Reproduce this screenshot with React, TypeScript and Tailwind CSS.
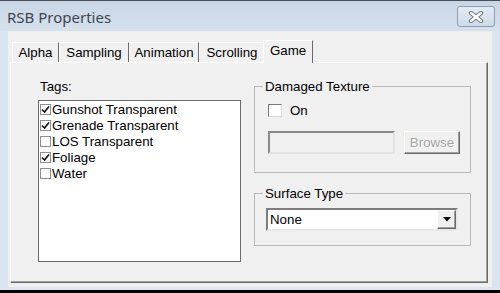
import React from "react";

const tabs = [
  { label: "Alpha", w: "w-[47px]" },
  { label: "Sampling", w: "w-[70px]" },
  { label: "Animation", w: "w-[70px]" },
  { label: "Scrolling", w: "w-[66px]" },
];

const tags = [
  { label: "Gunshot Transparent", checked: true },
  { label: "Grenade Transparent", checked: true },
  { label: "LOS Transparent", checked: false },
  { label: "Foliage", checked: true },
  { label: "Water", checked: false },
];

function ListCheck({ checked }: { checked: boolean }) {
  return (
    <div className="w-[11px] h-[11px] border border-[#8e8f8f] bg-white flex items-center justify-center shrink-0">
      {checked && (
        <svg width="9" height="9" viewBox="0 0 9 9">
          <path d="M1 4.5 L3.5 7 L8 1.5" fill="none" stroke="#111" strokeWidth="1.6" />
        </svg>
      )}
    </div>
  );
}

function CloseButton() {
  return (
    <div className="w-[38px] h-[21px] rounded-[3px] border border-[#8d9db3] bg-gradient-to-b from-[#e3ebf4] to-[#cfdbe9] flex items-center justify-center">
      <svg width="16" height="12" viewBox="0 0 16 12">
        <path d="M3 2 L13 10 M13 2 L3 10" stroke="#6f7a88" strokeWidth="4.4" strokeLinecap="round" />
        <path d="M3 2 L13 10 M13 2 L3 10" stroke="#ffffff" strokeWidth="2.4" strokeLinecap="round" />
      </svg>
    </div>
  );
}

export default function App() {
  return (
    <div className="w-[500px] h-[293px] flex flex-col bg-[#dbe5f0] border-t border-t-[#4a4f55] border-b-[3px] border-b-black overflow-hidden font-['Liberation_Sans',Arial,sans-serif] text-[13.3px] text-black">
      {/* title bar */}
      <div className="h-[30px] flex items-start justify-between pl-[7px] bg-gradient-to-b from-[#c9d6e5] to-[#d6e1ed]">
        <span className="mt-[6px] font-['Noto_Sans',sans-serif] text-[15px] leading-[20px] text-[#3d4650]">
          RSB Properties
        </span>
        <div className="mt-[5px] mr-[5px]">
          <CloseButton />
        </div>
      </div>

      {/* client */}
      <div className="ml-[8px] w-[484px] h-[256px] bg-[#f0f0f0] pt-[9px] pl-[2px]">
        {/* tab strip */}
        <div className="flex items-end h-[22px] pl-[2px]">
          {tabs.map((t) => (
            <div
              key={t.label}
              className={`${t.w} h-[20px] border-t border-l border-t-white border-l-white border-r border-r-[#696969] flex items-center justify-center leading-[15px]`}
            >
              {t.label}
            </div>
          ))}
          <div className="relative z-10 -mx-[2px] -mb-[1px] w-[50px] h-[23px] bg-[#f0f0f0] border-t border-l border-t-white border-l-white border-r border-r-[#696969] flex items-start justify-center pt-[2px] leading-[15px]">
            Game
          </div>
        </div>

        {/* panel */}
        <div className="w-[478px] h-[221px] border border-t-white border-l-white border-r-[#696969] border-b-[#696969] shadow-[inset_-1px_-1px_0_#a0a0a0] flex items-start pt-[16px] pl-[27px]">
          {/* tags */}
          <div className="flex flex-col">
            <span className="pl-[2px] leading-[15px]">Tags:</span>
            <div className="mt-[6px] w-[203px] h-[162px] border border-[#6b6b6b] bg-white">
              {tags.map((t) => (
                <div key={t.label} className="h-[16px] flex items-center pl-[1px] gap-[1px] leading-[15px]">
                  <ListCheck checked={t.checked} />
                  <span>{t.label}</span>
                </div>
              ))}
            </div>
          </div>

          {/* right column */}
          <div className="ml-[13px] flex flex-col">
            <fieldset className="w-[217px] border border-[#b9b9b9] px-0 pb-[18px]">
              <legend className="ml-[8px] px-[2px] leading-[15px]">Damaged Texture</legend>
              <div className="pl-[13px]">
                <div className="mt-[9px] flex items-center">
                  <div className="w-[14px] h-[13px] border border-t-[#7a7a7a] border-l-[#7a7a7a] border-r-[#dcdcdc] border-b-[#dcdcdc] bg-white" />
                  <span className="ml-[8px] leading-[15px]">On</span>
                </div>
                <div className="mt-[13px] flex items-center">
                  <div className="w-[127px] h-[23px] border-2 border-t-[#8a8a8a] border-l-[#8a8a8a] border-r-[#e3e3e3] border-b-[#e3e3e3] bg-[#f0f0f0]" />
                  <div className="ml-[9px] w-[56px] h-[23px] border border-t-white border-l-white border-r-[#696969] border-b-[#696969] shadow-[inset_-1px_-1px_0_#a0a0a0] flex items-center justify-center text-[#a3a3a3] [text-shadow:1px_1px_0_#ffffff]">
                    Browse
                  </div>
                </div>
              </div>
            </fieldset>

            <fieldset className="mt-[13px] w-[217px] border border-[#b9b9b9] px-0 pb-[14px]">
              <legend className="ml-[8px] px-[2px] leading-[15px]">Surface Type</legend>
              <div className="pl-[11px]">
                <div className="mt-[7px] w-[192px] h-[23px] border-2 border-t-[#7d7d7d] border-l-[#7d7d7d] border-r-[#e8e8e8] border-b-[#e8e8e8] bg-white flex items-center justify-between">
                  <span className="pl-[2px] leading-[15px]">None</span>
                  <div className="w-[19px] h-[19px] border border-t-white border-l-white border-r-[#696969] border-b-[#696969] shadow-[inset_-1px_-1px_0_#a0a0a0] bg-[#f0f0f0] flex items-center justify-center">
                    <svg width="8" height="5" viewBox="0 0 8 5">
                      <path d="M0 0 L8 0 L4 4.5 Z" fill="#000" />
                    </svg>
                  </div>
                </div>
              </div>
            </fieldset>
          </div>
        </div>
      </div>
    </div>
  );
}
